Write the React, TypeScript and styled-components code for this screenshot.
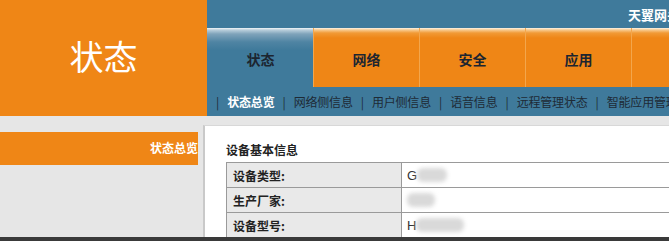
import React from 'react';
import styled, { createGlobalStyle } from 'styled-components';

const GlobalStyle = createGlobalStyle`
  html, body {
    margin: 0;
    padding: 0;
    background: #e6e6e6;
    overflow: hidden;
  }
  body {
    font-family: "Noto Sans CJK SC", "DejaVu Sans", sans-serif;
  }
`;

const Page = styled.div`
  width: 669px;
  height: 241px;
  display: flex;
  flex-direction: column;
  overflow: hidden;
`;

const Header = styled.div`
  display: grid;
  grid-template-columns: 207px 1fr;
  height: 116px;
  flex-shrink: 0;
`;

const Logo = styled.div`
  background: #ef8616;
  color: #fff;
  font-size: 34px;
  display: flex;
  align-items: center;
  justify-content: center;
  padding-bottom: 6px;
`;

const HeaderRight = styled.div`
  background: #3f7a9b;
  display: flex;
  flex-direction: column;
  overflow: hidden;
`;

const TopBar = styled.div`
  height: 28px;
  display: flex;
  align-items: center;
  padding-left: 421px;
  color: #fff;
  font-size: 13px;
  font-weight: 700;
  white-space: nowrap;
`;

const TabRow = styled.div`
  height: 59px;
  display: flex;
`;

const Tab = styled.div<{ $active?: boolean }>`
  flex: 0 0 105px;
  display: flex;
  align-items: center;
  justify-content: center;
  padding-top: 2px;
  font-size: 14px;
  font-weight: 700;
  color: #1c2530;
  white-space: nowrap;
  border-left: 1px solid ${(p) => (p.$active ? 'transparent' : '#f3a64c')};
  background: ${(p) =>
    p.$active
      ? 'linear-gradient(#f2f6f8 0px, #b9cedb 2px, #7fa3ba 6px, #4f84a3 14px, #3f7a9b 22px)'
      : 'linear-gradient(#fdf3e6 0px, #f8c98c 2px, #f19a35 5px, #ef8616 10px)'};
`;

const SubNav = styled.div`
  height: 29px;
  display: flex;
  align-items: center;
  padding-left: 9px;
  font-size: 12px;
  color: #1e2a36;
  white-space: nowrap;
`;

const Sep = styled.span`
  margin-right: 8px;
  color: #1e2a36;
`;

const SubItem = styled.span<{ $active?: boolean }>`
  margin-right: 8px;
  letter-spacing: -0.2px;
  color: ${(p) => (p.$active ? '#fff' : '#1e2a36')};
  font-weight: ${(p) => (p.$active ? 700 : 400)};
`;

const Body = styled.div`
  flex: 1;
  display: grid;
  grid-template-columns: 203px 1fr;
  background: #e6e6e6;
  overflow: hidden;
`;

const Sidebar = styled.div`
  padding-top: 16px;
`;

const SideItem = styled.div`
  width: 198px;
  height: 33px;
  box-sizing: border-box;
  background: #ef8616;
  color: #fff;
  font-size: 12px;
  font-weight: 700;
  display: flex;
  align-items: center;
  justify-content: flex-end;
  padding-bottom: 3px;
`;

const Main = styled.div`
  margin-top: 9px;
  background: #fff;
  border-left: 2px solid #c9c9c9;
  border-top: 1px solid #d8d8d8;
  padding: 11px 0 0 21px;
  overflow: hidden;
`;

const SectionTitle = styled.div`
  font-size: 12px;
  font-weight: 700;
  color: #222;
  height: 25px;
  display: flex;
  align-items: center;
`;

const Table = styled.div`
  border-top: 1px solid #9a9a9a;
  border-left: 1px solid #9a9a9a;
`;

const Row = styled.div`
  display: grid;
  grid-template-columns: 175px 1fr;
  height: 24px;
  border-bottom: 1px solid #9a9a9a;
`;

const Label = styled.div`
  background: #e9e9e9;
  border-right: 1px solid #9a9a9a;
  font-size: 12px;
  font-weight: 700;
  color: #222;
  display: flex;
  align-items: center;
  padding-left: 6px;
`;

const Value = styled.div`
  display: flex;
  align-items: center;
  padding-left: 5px;
  font-family: "Liberation Sans", sans-serif;
  font-size: 13px;
  color: #333;
`;

const Blur = styled.span<{ $w: number }>`
  display: inline-block;
  width: ${(p) => p.$w}px;
  height: 14px;
  background: #d9d9d9;
  filter: blur(2px);
  border-radius: 6px;
`;

const Footer = styled.div`
  height: 4px;
  background: #3a3a3a;
  flex-shrink: 0;
`;

const tabs = ['状态', '网络', '安全', '应用', '管理'];
const subs = ['状态总览', '网络侧信息', '用户侧信息', '语音信息', '远程管理状态', '智能应用管理'];

export default function App() {
  return (
    <Page>
      <GlobalStyle />
      <Header>
        <Logo>状态</Logo>
        <HeaderRight>
          <TopBar>天翼网关</TopBar>
          <TabRow>
            {tabs.map((t, i) => (
              <Tab key={t} $active={i === 0}>
                {t}
              </Tab>
            ))}
          </TabRow>
          <SubNav>
            {subs.map((s, i) => (
              <React.Fragment key={s}>
                <Sep>|</Sep>
                <SubItem $active={i === 0}>{s}</SubItem>
              </React.Fragment>
            ))}
          </SubNav>
        </HeaderRight>
      </Header>
      <Body>
        <Sidebar>
          <SideItem>状态总览</SideItem>
        </Sidebar>
        <Main>
          <SectionTitle>设备基本信息</SectionTitle>
          <Table>
            <Row>
              <Label>设备类型:</Label>
              <Value>
                G<Blur $w={30} />
              </Value>
            </Row>
            <Row>
              <Label>生产厂家:</Label>
              <Value>
                <Blur $w={28} />
              </Value>
            </Row>
            <Row>
              <Label>设备型号:</Label>
              <Value>
                H<Blur $w={48} />
              </Value>
            </Row>
          </Table>
        </Main>
      </Body>
      <Footer />
    </Page>
  );
}
